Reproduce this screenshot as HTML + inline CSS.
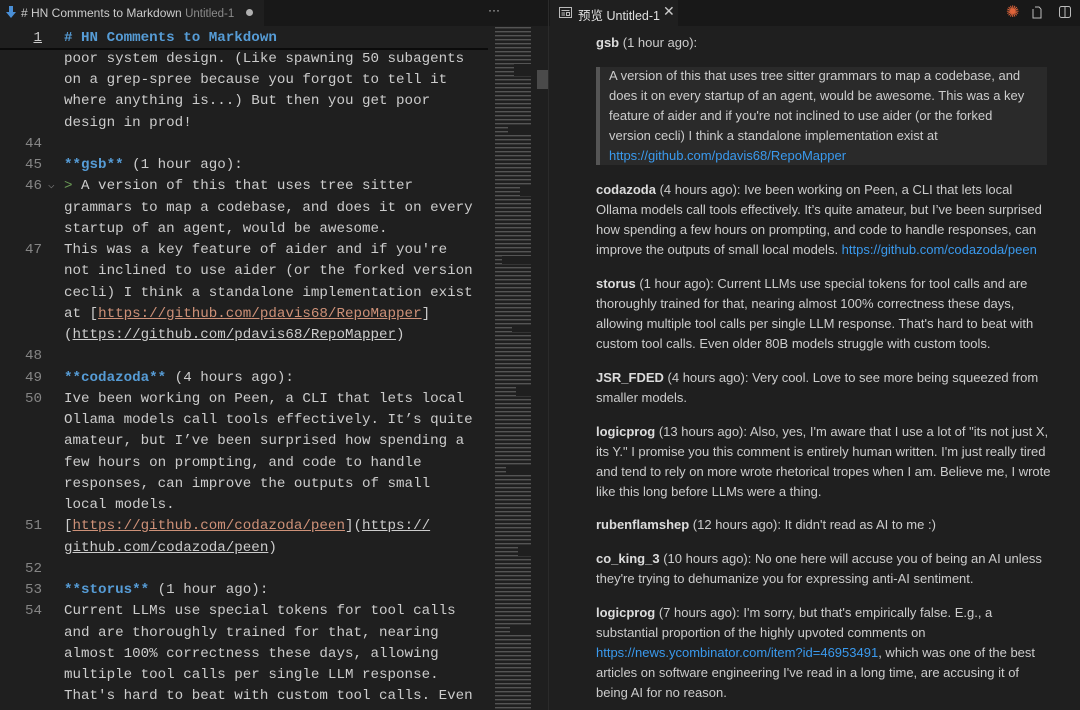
<!DOCTYPE html>
<html><head><meta charset="utf-8"><style>
*{margin:0;padding:0;box-sizing:border-box}
body{width:1080px;height:710px;background:#1f1f1f;overflow:hidden;position:relative;font-family:"Liberation Sans","Noto Sans CJK SC",sans-serif}
.tabbar{position:absolute;top:0;height:26px;background:#181818}
.mono{font-family:"Liberation Mono","DejaVu Sans Mono",monospace;font-size:14.2px;color:#cccccc;white-space:pre}
.l{position:absolute;left:64px;height:21.25px;line-height:21.25px}
.n{position:absolute;width:42px;text-align:right;left:0;color:#858585;font-family:"Liberation Mono",monospace;font-size:14.2px;line-height:21.25px}
.b{color:#569cd6;font-weight:bold}
.u{color:#ce9178;text-decoration:underline}
.w{text-decoration:underline}
.p{position:absolute;left:596px;font-size:13px;line-height:20px;color:#cccccc;white-space:nowrap}
.p b{color:#dcdcdc}
.a{color:#3a9aee}
</style></head><body>
<div class="tabbar" style="left:0;width:548px"></div>
<div style="position:absolute;left:0;top:0;width:264px;height:26px;background:#1f1f1f"></div>
<svg style="position:absolute;left:6px;top:6px" width="10" height="13" viewBox="0 0 10 13"><path d="M3 0h4v6h3L5 12 0 6h3z" fill="#4a8fd6"/></svg>
<div style="position:absolute;left:21px;top:6px;font-size:12px;color:#cccccc;white-space:nowrap"># HN Comments to Markdown <span style="color:#8b8b8b;font-size:11.5px">Untitled-1</span></div>
<div style="position:absolute;left:246px;top:9px;width:7px;height:7px;border-radius:50%;background:#b0b0b0"></div>
<div style="position:absolute;left:488px;top:3px;color:#ccc;font-size:12px">···</div>
<div style="position:absolute;left:548px;top:0;width:1px;height:710px;background:#2b2b2b"></div>
<div class="tabbar" style="left:549px;width:531px"></div>
<div style="position:absolute;left:550px;top:0;width:128px;height:26px;background:#1f1f1f"></div>
<svg style="position:absolute;left:559px;top:6px" width="13" height="13" viewBox="0 0 13 13"><rect x="0.5" y="1.5" width="12" height="10" fill="none" stroke="#bbb"/><line x1="2.5" y1="4.5" x2="10.5" y2="4.5" stroke="#bbb"/><line x1="2.5" y1="7" x2="6" y2="7" stroke="#bbb"/><line x1="2.5" y1="9" x2="6" y2="9" stroke="#bbb"/><rect x="7.5" y="6.5" width="3" height="3" fill="none" stroke="#bbb"/></svg>
<div style="position:absolute;left:578px;top:5px;font-size:12.5px;color:#e0e0e0;white-space:nowrap">预览 Untitled-1</div>
<div style="position:absolute;left:663px;top:3px;font-size:14px;color:#ccc">✕</div>
<div style="position:absolute;left:1006px;top:2px;font-size:16px;color:#e0643a">✺</div>
<svg style="position:absolute;left:1030px;top:5px" width="14" height="15" viewBox="0 0 14 15"><path d="M3 4v9h8V4M5 2h4l2 2" fill="none" stroke="#bbb"/></svg>
<svg style="position:absolute;left:1058px;top:5px" width="14" height="14" viewBox="0 0 14 14"><rect x="1.5" y="1.5" width="11" height="11" rx="2" fill="none" stroke="#bbb"/><line x1="7" y1="1.5" x2="7" y2="12.5" stroke="#bbb"/></svg>

<div class="mono">
<div class="n" style="top:27.5px;color:#cccccc;text-decoration:underline">1</div>
<div class="l b" style="top:27.5px"># HN Comments to Markdown</div>
<div style="position:absolute;left:0;top:48px;width:488px;height:2px;background:#0b0b0b"></div>
<div class="l" style="top:48.75px">poor system design. (Like spawning 50 subagents</div>
<div class="l" style="top:70px">on a grep-spree because you forgot to tell it</div>
<div class="l" style="top:91.25px">where anything is...) But then you get poor</div>
<div class="l" style="top:112.5px">design in prod!</div>
<div class="n" style="top:133.75px">44</div>
<div class="n" style="top:155px">45</div>
<div class="l" style="top:155px"><span class="b">**gsb**</span> (1 hour ago):</div>
<div class="n" style="top:176.25px">46</div>
<div style="position:absolute;left:48px;top:176.25px;line-height:21.25px;color:#858585;font-size:11px">⌵</div>
<div class="l" style="top:176.25px"><span style="color:#6a9955">&gt;</span> A version of this that uses tree sitter</div>
<div class="l" style="top:197.5px">grammars to map a codebase, and does it on every</div>
<div class="l" style="top:218.75px">startup of an agent, would be awesome.</div>
<div class="n" style="top:240px">47</div>
<div class="l" style="top:240px">This was a key feature of aider and if you're</div>
<div class="l" style="top:261.25px">not inclined to use aider (or the forked version</div>
<div class="l" style="top:282.5px">cecli) I think a standalone implementation exist</div>
<div class="l" style="top:303.75px">at [<span class="u">https://github.com/pdavis68/RepoMapper</span>]</div>
<div class="l" style="top:325px">(<span class="w">https://github.com/pdavis68/RepoMapper</span>)</div>
<div class="n" style="top:346.25px">48</div>
<div class="n" style="top:367.5px">49</div>
<div class="l" style="top:367.5px"><span class="b">**codazoda**</span> (4 hours ago):</div>
<div class="n" style="top:388.75px">50</div>
<div class="l" style="top:388.75px">Ive been working on Peen, a CLI that lets local</div>
<div class="l" style="top:410px">Ollama models call tools effectively. It’s quite</div>
<div class="l" style="top:431.25px">amateur, but I’ve been surprised how spending a</div>
<div class="l" style="top:452.5px">few hours on prompting, and code to handle</div>
<div class="l" style="top:473.75px">responses, can improve the outputs of small</div>
<div class="l" style="top:495px">local models.</div>
<div class="n" style="top:516.25px">51</div>
<div class="l" style="top:516.25px">[<span class="u">https://github.com/codazoda/peen</span>](<span class="w">https://</span></div>
<div class="l" style="top:537.5px"><span class="w">github.com/codazoda/peen</span>)</div>
<div class="n" style="top:558.75px">52</div>
<div class="n" style="top:580px">53</div>
<div class="l" style="top:580px"><span class="b">**storus**</span> (1 hour ago):</div>
<div class="n" style="top:601.25px">54</div>
<div class="l" style="top:601.25px">Current LLMs use special tokens for tool calls</div>
<div class="l" style="top:622.5px">and are thoroughly trained for that, nearing</div>
<div class="l" style="top:643.75px">almost 100% correctness these days, allowing</div>
<div class="l" style="top:665px">multiple tool calls per single LLM response.</div>
<div class="l" style="top:686.25px">That's hard to beat with custom tool calls. Even</div>
</div>
<div style="position:absolute;left:488px;top:26px;width:48px;height:684px;background:#1f1f1f"></div>
<svg style="position:absolute;left:494px;top:26px" width="42" height="684">
<defs><pattern id="mm" width="42" height="4" patternUnits="userSpaceOnUse"><rect x="1" y="1" width="36" height="1.4" fill="#6a6a6a"/></pattern></defs>
<rect width="40" height="684" fill="url(#mm)" opacity="0.7"/>
<g fill="#1f1f1f"><rect x="20" y="38" width="22" height="12"/><rect x="14" y="100" width="28" height="8"/><rect x="26" y="160" width="16" height="10"/><rect x="8" y="230" width="34" height="8"/><rect x="18" y="300" width="24" height="6"/><rect x="22" y="360" width="20" height="10"/><rect x="12" y="440" width="30" height="8"/><rect x="24" y="520" width="18" height="10"/><rect x="16" y="600" width="26" height="8"/></g>
</svg>
<div style="position:absolute;left:537px;top:70px;width:11px;height:19px;background:#4a4a4a"></div>

<div class="p" style="top:33px"><b>gsb</b> (1 hour ago):</div>
<div style="position:absolute;left:596px;top:67px;width:451px;height:98px;background:#2a2a2a;border-left:4px solid #555"></div>
<div class="p" style="left:609px;top:66px">A version of this that uses tree sitter grammars to map a codebase, and</div>
<div class="p" style="left:609px;top:86px">does it on every startup of an agent, would be awesome. This was a key</div>
<div class="p" style="left:609px;top:106px">feature of aider and if you're not inclined to use aider (or the forked</div>
<div class="p" style="left:609px;top:126px">version cecli) I think a standalone implementation exist at</div>
<div class="p a" style="left:609px;top:146px">https://github.com/pdavis68/RepoMapper</div>
<div class="p" style="top:180px"><b>codazoda</b> (4 hours ago): Ive been working on Peen, a CLI that lets local</div>
<div class="p" style="top:200px">Ollama models call tools effectively. It’s quite amateur, but I’ve been surprised</div>
<div class="p" style="top:220px">how spending a few hours on prompting, and code to handle responses, can</div>
<div class="p" style="top:240px">improve the outputs of small local models. <span class="a">https://github.com/codazoda/peen</span></div>
<div class="p" style="top:274px"><b>storus</b> (1 hour ago): Current LLMs use special tokens for tool calls and are</div>
<div class="p" style="top:294px">thoroughly trained for that, nearing almost 100% correctness these days,</div>
<div class="p" style="top:314px">allowing multiple tool calls per single LLM response. That's hard to beat with</div>
<div class="p" style="top:334px">custom tool calls. Even older 80B models struggle with custom tools.</div>
<div class="p" style="top:368px"><b>JSR_FDED</b> (4 hours ago): Very cool. Love to see more being squeezed from</div>
<div class="p" style="top:388px">smaller models.</div>
<div class="p" style="top:422px"><b>logicprog</b> (13 hours ago): Also, yes, I'm aware that I use a lot of "its not just X,</div>
<div class="p" style="top:442px">its Y." I promise you this comment is entirely human written. I'm just really tired</div>
<div class="p" style="top:462px">and tend to rely on more wrote rhetorical tropes when I am. Believe me, I wrote</div>
<div class="p" style="top:482px">like this long before LLMs were a thing.</div>
<div class="p" style="top:515px"><b>rubenflamshep</b> (12 hours ago): It didn't read as AI to me :)</div>
<div class="p" style="top:549px"><b>co_king_3</b> (10 hours ago): No one here will accuse you of being an AI unless</div>
<div class="p" style="top:569px">they're trying to dehumanize you for expressing anti-AI sentiment.</div>
<div class="p" style="top:603px"><b>logicprog</b> (7 hours ago): I'm sorry, but that's empirically false. E.g., a</div>
<div class="p" style="top:623px">substantial proportion of the highly upvoted comments on</div>
<div class="p" style="top:643px"><span class="a">https://news.ycombinator.com/item?id=46953491</span>, which was one of the best</div>
<div class="p" style="top:663px">articles on software engineering I've read in a long time, are accusing it of</div>
<div class="p" style="top:683px">being AI for no reason.</div>
</body></html>
